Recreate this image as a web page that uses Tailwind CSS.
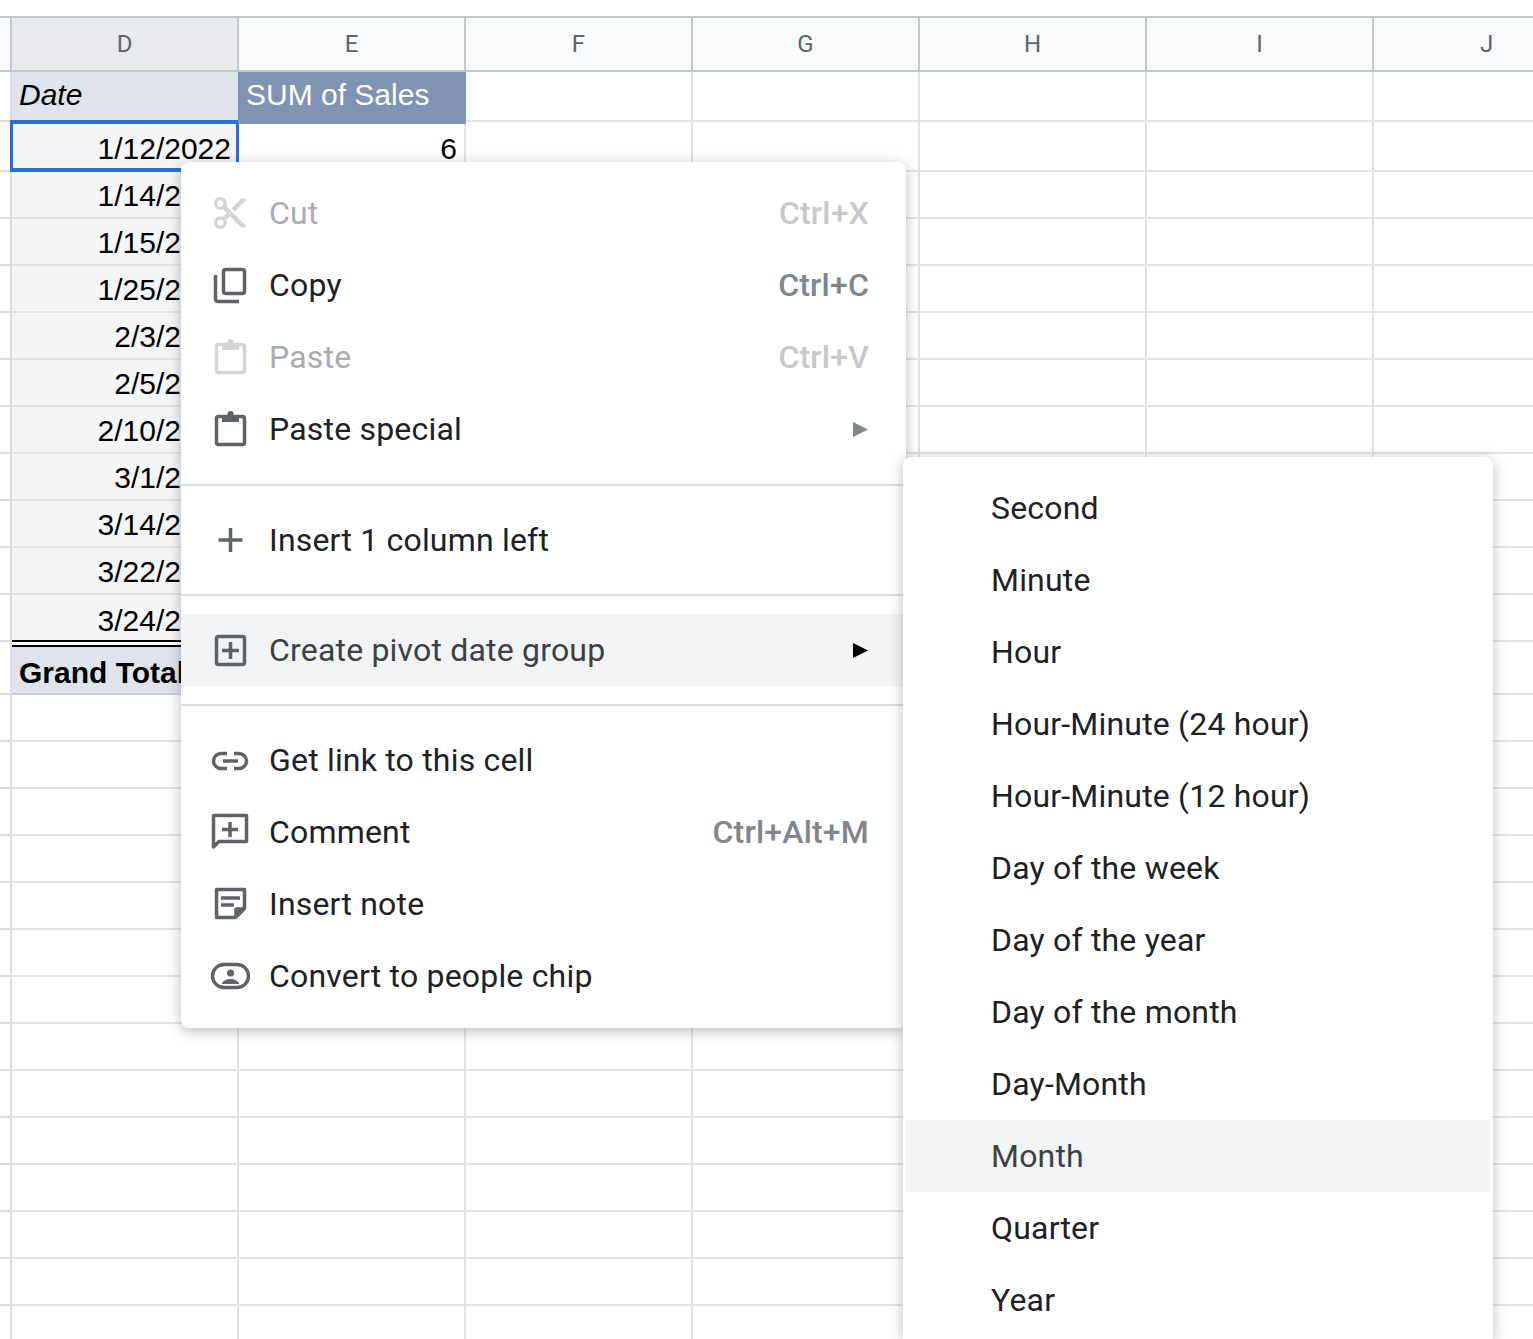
<!DOCTYPE html>
<html lang="en">
<head>
    <meta charset="UTF-8">
    <meta name="viewport" content="width=device-width, initial-scale=1.0">
    <title>Pivot date group menu</title>
    <script src="https://cdn.jsdelivr.net/npm/@tailwindcss/browser@4"></script>
</head>
<body class="relative w-[1533px] h-[1339px] overflow-hidden bg-white pt-[16px] font-['Liberation_Sans',Arial,sans-serif] text-[30px] text-black">
    <div class="h-[1323px] w-full overflow-hidden">
    <!-- column headers -->
    <div class="flex w-[1700px] h-[56px] border-y-2 border-[#c4c7c8] bg-[#f8f9fa] font-['Roboto',sans-serif] text-[24px] text-[#5f6368]">
        <div class="w-[12px] shrink-0 border-r-2 border-[#c4c7c8]"></div>
        <div class="w-[227px] shrink-0 flex items-center justify-center border-r-2 border-[#c4c7c8] bg-[#e8eaed]">D</div>
        <div class="w-[227px] shrink-0 flex items-center justify-center border-r-2 border-[#c4c7c8]">E</div>
        <div class="w-[227px] shrink-0 flex items-center justify-center border-r-2 border-[#c4c7c8]">F</div>
        <div class="w-[227px] shrink-0 flex items-center justify-center border-r-2 border-[#c4c7c8]">G</div>
        <div class="w-[227px] shrink-0 flex items-center justify-center border-r-2 border-[#c4c7c8]">H</div>
        <div class="w-[227px] shrink-0 flex items-center justify-center border-r-2 border-[#c4c7c8]">I</div>
        <div class="w-[227px] shrink-0 flex items-center justify-center border-r-2 border-[#c4c7c8]">J</div>
    </div>

    <!-- pivot header row -->
    <div class="flex w-[1700px] h-[50px]">
        <div class="w-[12px] shrink-0 border-r-2 border-b-2 border-[#dadcdd]"></div>
        <div class="w-[227px] shrink-0 border-r-2 border-b-2 border-[#e2e3e3] bg-[#dfe3ec] pl-[7px] pt-[4px] leading-[38px] italic">Date</div>
        <div class="relative z-10 -ml-[1px] w-[228px] h-[52px] shrink-0 bg-[#7f93b3] pl-[8px] pt-[4px] leading-[38px] text-white">SUM of Sales</div>
        <div class="w-[227px] shrink-0 border-r-2 border-b-2 border-[#e2e3e3]"></div>
        <div class="w-[227px] shrink-0 border-r-2 border-b-2 border-[#e2e3e3]"></div>
        <div class="w-[227px] shrink-0 border-r-2 border-b-2 border-[#e2e3e3]"></div>
        <div class="w-[227px] shrink-0 border-r-2 border-b-2 border-[#e2e3e3]"></div>
        <div class="w-[227px] shrink-0 border-r-2 border-b-2 border-[#e2e3e3]"></div>
    </div>

    <div id="rows"></div>
    </div>

    <!-- context menu -->
    <div class="absolute z-20 left-[181px] top-[162px] w-[725px] h-[866px] rounded-[8px] bg-white py-[15px] font-['Roboto',sans-serif] text-[32px] tracking-[0.19px] text-[#202124] shadow-[0_3px_14px_rgba(60,64,67,0.35)]">
        <div class="flex items-center h-[72px] pl-[29px] pr-[37px] text-[#a9acaf]">
            <svg class="w-[40px] h-[40px] mr-[19px]" viewBox="-0.5 -0.5 25 25" fill="#d2d4d6"><path d="M9.64 7.64c.23-.5.36-1.05.36-1.64 0-2.21-1.79-4-4-4S2 3.79 2 6s1.79 4 4 4c.59 0 1.14-.13 1.64-.36L10 12l-2.36 2.36C7.14 14.13 6.59 14 6 14c-2.21 0-4 1.79-4 4s1.79 4 4 4 4-1.79 4-4c0-.59-.13-1.14-.36-1.64L12 14l7 7h3v-1L9.64 7.64zM6 8c-1.1 0-2-.89-2-2s.9-2 2-2 2 .89 2 2-.9 2-2 2zm0 12c-1.1 0-2-.89-2-2s.9-2 2-2 2 .89 2 2-.9 2-2 2zm6-7.5c-.28 0-.5-.22-.5-.5s.22-.5.5-.5.5.22.5.5-.22.5-.5.5zM19 3l-6 6 2 2 7-7V3h-3z"/></svg>
            <span>Cut</span>
            <span class="ml-auto font-medium text-[#c6c8ca]">Ctrl+X</span>
        </div>
        <div class="flex items-center h-[72px] pl-[29px] pr-[37px]">
            <svg class="w-[40px] h-[40px] mr-[19px]" viewBox="0 0 40 40" fill="none" stroke="#5f6368" stroke-width="3.5"><path d="M5.5 10V34q0 2.5 2.5 2.5H29"/><rect x="13.5" y="4.5" width="21" height="24" rx="2"/></svg>
            <span>Copy</span>
            <span class="ml-auto font-medium text-[#80868b]">Ctrl+C</span>
        </div>
        <div class="flex items-center h-[72px] pl-[29px] pr-[37px] text-[#a9acaf]">
            <svg class="w-[40px] h-[40px] mr-[19px]" viewBox="0 0 40 40" fill="none" stroke="#d2d4d6" stroke-width="3.5"><rect x="6.5" y="7.5" width="28" height="28" rx="2"/><rect x="12" y="6" width="17" height="7" fill="#d2d4d6" stroke="none"/><circle cx="20.5" cy="5" r="3" fill="#d2d4d6" stroke="none"/></svg>
            <span>Paste</span>
            <span class="ml-auto font-medium text-[#c6c8ca]">Ctrl+V</span>
        </div>
        <div class="flex items-center h-[72px] pl-[29px] pr-[37px]">
            <svg class="w-[40px] h-[40px] mr-[19px]" viewBox="0 0 40 40" fill="none" stroke="#5f6368" stroke-width="3.5"><rect x="6.5" y="7.5" width="28" height="28" rx="2"/><rect x="12" y="6" width="17" height="7" fill="#5f6368" stroke="none"/><circle cx="20.5" cy="5" r="3" fill="#5f6368" stroke="none"/></svg>
            <span>Paste special</span>
            <svg class="ml-auto mr-[1px] w-[15px] h-[15px]" viewBox="0 0 15 15" fill="#80868b"><path d="M0 0L15 7.5L0 15Z"/></svg>
        </div>

        <div class="mt-[19px] mb-[18px] h-[2px] bg-[#dadce0]"></div>

        <div class="flex items-center h-[72px] pl-[29px] pr-[37px]">
            <svg class="w-[40px] h-[40px] mr-[19px]" viewBox="0 0 40 40" fill="none" stroke="#5f6368" stroke-width="3.5"><path d="M20.5 8V32M8.5 20H32.5"/></svg>
            <span>Insert 1 column left</span>
        </div>

        <div class="mt-[18px] mb-[18px] h-[2px] bg-[#dadce0]"></div>

        <div class="flex items-center h-[72px] pl-[29px] pr-[37px] bg-[#f1f3f4] text-[#3c4043]">
            <svg class="w-[40px] h-[40px] mr-[19px]" viewBox="0 0 40 40" fill="none" stroke="#5f6368" stroke-width="3.5"><rect x="6.5" y="6.5" width="28" height="28" rx="2"/><path d="M20.5 12V29M12 20.5H29"/></svg>
            <span>Create pivot date group</span>
            <svg class="ml-auto mr-[1px] w-[15px] h-[15px]" viewBox="0 0 15 15" fill="#000"><path d="M0 0L15 7.5L0 15Z"/></svg>
        </div>

        <div class="mt-[18px] mb-[18px] h-[2px] bg-[#dadce0]"></div>

        <div class="flex items-center h-[72px] pl-[29px] pr-[37px]">
            <svg class="w-[40px] h-[40px] mr-[19px]" viewBox="0 0 40 40" fill="none" stroke="#5f6368" stroke-width="3.5"><path d="M17 13.5H11a7.5 7.5 0 0 0 0 15H17M24 13.5H29a7.5 7.5 0 0 1 0 15H24M13 21H28"/></svg>
            <span>Get link to this cell</span>
        </div>
        <div class="flex items-center h-[72px] pl-[29px] pr-[37px]">
            <svg class="w-[40px] h-[40px] mr-[19px]" viewBox="0 0 40 40" fill="none" stroke="#5f6368" stroke-width="3.5" stroke-linejoin="round"><path d="M3.5 3.5H36.5V29.5H9L3.5 35Z"/><path d="M20 10V25M12 17.5H28"/></svg>
            <span>Comment</span>
            <span class="ml-auto font-medium text-[#80868b]">Ctrl+Alt+M</span>
        </div>
        <div class="flex items-center h-[72px] pl-[29px] pr-[37px]">
            <svg class="w-[40px] h-[40px] mr-[19px]" viewBox="0 0 40 40" fill="none" stroke="#5f6368" stroke-width="3.5" stroke-linejoin="round"><path d="M6.5 5.5H34.5V24L25 33.5H6.5Z"/><path d="M11 14H30M11 21H24"/><path d="M34 25H26V33Z" fill="#5f6368"/></svg>
            <span>Insert note</span>
        </div>
        <div class="flex items-center h-[72px] pl-[29px] pr-[37px]">
            <svg class="w-[40px] h-[40px] mr-[19px]" viewBox="0 0 40 40" fill="none" stroke="#5f6368" stroke-width="3.5"><rect x="2.5" y="8.5" width="36" height="23" rx="11.5"/><circle cx="20.5" cy="17" r="3.5" fill="#5f6368" stroke="none"/><path d="M12 28c0-3 5-5 8.5-5s8.5 2 8.5 5Z" fill="#5f6368" stroke="none"/></svg>
            <span>Convert to people chip</span>
        </div>
    </div>

    <!-- date group submenu, runs off the bottom of the window -->
    <div class="absolute z-30 left-[903px] top-[457px] w-[590px] h-[882px] rounded-t-[8px] bg-white px-[3px] py-[15px] font-['Roboto',sans-serif] text-[32px] tracking-[0.19px] text-[#202124] shadow-[0_3px_14px_rgba(60,64,67,0.35)]">
        <div class="flex items-center h-[72px] pl-[85px]">Second</div>
        <div class="flex items-center h-[72px] pl-[85px]">Minute</div>
        <div class="flex items-center h-[72px] pl-[85px]">Hour</div>
        <div class="flex items-center h-[72px] pl-[85px]">Hour-Minute (24 hour)</div>
        <div class="flex items-center h-[72px] pl-[85px]">Hour-Minute (12 hour)</div>
        <div class="flex items-center h-[72px] pl-[85px]">Day of the week</div>
        <div class="flex items-center h-[72px] pl-[85px]">Day of the year</div>
        <div class="flex items-center h-[72px] pl-[85px]">Day of the month</div>
        <div class="flex items-center h-[72px] pl-[85px]">Day-Month</div>
        <div class="flex items-center h-[72px] pl-[85px] bg-[#f1f3f4] text-[#3c4043]">Month</div>
        <div class="flex items-center h-[72px] pl-[85px]">Quarter</div>
        <div class="flex items-center h-[72px] pl-[85px]">Year</div>
    </div>

    <script>
        const dates = ['1/14/2022', '1/15/2022', '1/25/2022', '2/3/2022', '2/5/2022', '2/10/2022', '3/1/2022', '3/14/2022', '3/22/2022', '3/24/2022'];
        const blank = '<div class="w-[227px] shrink-0 border-r-2 border-b-2 border-[#e2e3e3]"></div>';
        const gutter = '<div class="w-[12px] shrink-0 border-r-2 border-b-2 border-[#dadcdd]"></div>';
        let html = '';

        // selected first row
        html += `<div class="flex w-[1700px] h-[50px]">${gutter}
            <div class="relative w-[227px] shrink-0 border-r-2 border-b-2 border-[#e2e3e3] bg-[#f3f5f7] pr-[6px] pt-[10px] leading-[34px] text-right">1/12/2022
                <div class="absolute -left-[2px] -top-[2px] -right-[2px] -bottom-[2px] border-x-[3px] border-y-4 border-[#2a6fd6]"></div>
            </div>
            <div class="w-[227px] shrink-0 border-r-2 border-b-2 border-[#e2e3e3] pr-[7px] pt-[10px] leading-[34px] text-right">6</div>
            ${blank.repeat(5)}</div>`;

        dates.forEach((date, i) => {
            const last = i === dates.length - 1;
            const cls = last ? 'border-b-black pt-[9px]' : 'border-b-[#e2e3e3] pt-[7px]';
            html += `<div class="flex w-[1700px] h-[47px]">${gutter}
                <div class="w-[227px] shrink-0 border-r-2 border-b-2 border-r-[#e2e3e3] ${cls} bg-[#f3f5f7] pr-[6px] leading-[34px] text-right">${date}</div>
                ${blank.repeat(6)}</div>`;
        });

        // grand total, under the double rule
        html += `<div class="flex w-[1700px] h-[53px]">${gutter}
            <div class="w-[227px] shrink-0 mt-[3px] border-t-2 border-t-black border-b-2 border-b-[#c9ccd4] bg-[#dfe3ec] pl-[7px] leading-[52px] font-bold">Grand Total</div>
            ${blank.repeat(6)}</div>`;

        for (let i = 0; i < 14; i++) {
            html += `<div class="flex w-[1700px] h-[47px]">${gutter}${blank.repeat(7)}</div>`;
        }
        document.getElementById('rows').innerHTML = html;
    </script>
</body>
</html>
